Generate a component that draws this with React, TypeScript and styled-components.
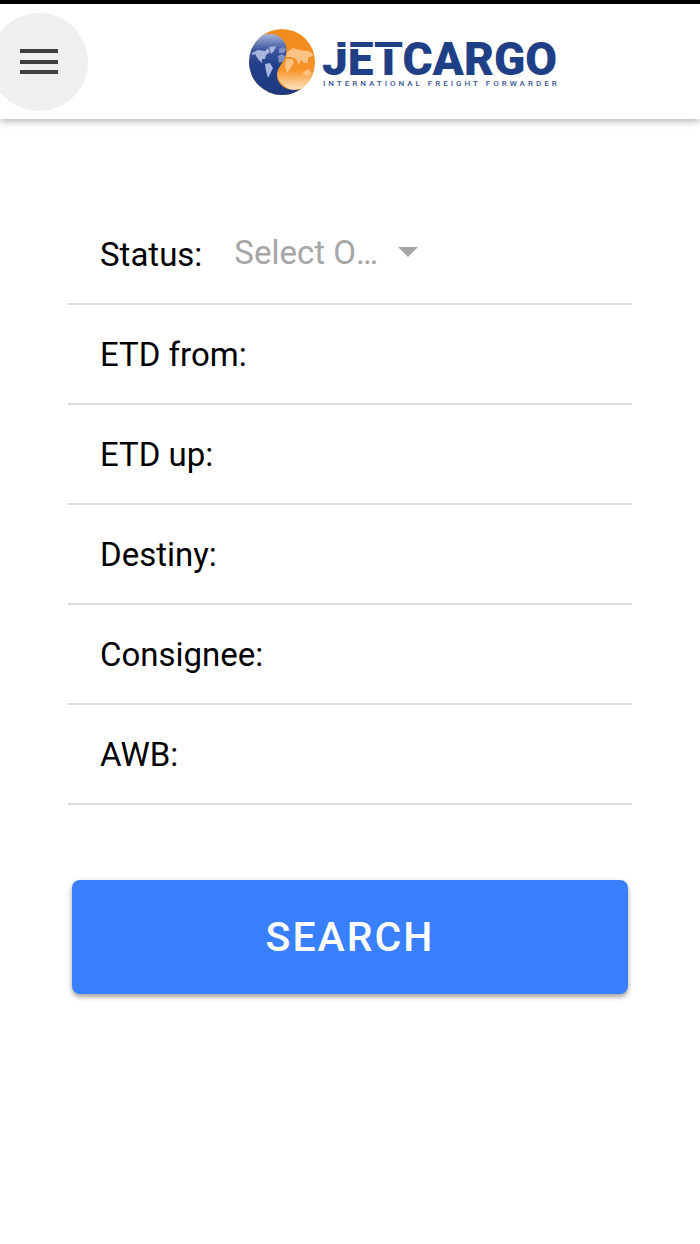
import React from "react";
import styled, { createGlobalStyle } from "styled-components";

const GlobalStyle = createGlobalStyle`
  *, *::before, *::after { box-sizing: border-box; }
  body {
    margin: 0;
    background: #fff;
    color: #000;
    font-family: Roboto, "Liberation Sans", sans-serif;
  }
`;

const Page = styled.div`
  min-height: 100vh;
  border-top: 4px solid #000;
`;

const Header = styled.header`
  display: flex;
  align-items: center;
  height: 115px;
  padding-right: 14px;
  background: #fff;
  box-shadow: 0 2px 8px rgba(0, 0, 0, 0.32);
`;

const MenuButton = styled.button`
  display: grid;
  place-items: center;
  flex: none;
  width: 98px;
  height: 98px;
  margin-left: -10px;
  padding: 0;
  border: 0;
  border-radius: 50%;
  background: #efefef;
  color: #3f3f3f;
`;

const Brand = styled.div`
  display: flex;
  flex: 1;
  justify-content: center;
  padding-left: 36px;
`;

const Wordmark = styled.text`
  font-family: Roboto, sans-serif;
  font-size: 46px;
  font-weight: 900;
  fill: #1f3f86;
`;

const Tagline = styled.text`
  font-family: Roboto, sans-serif;
  font-size: 8px;
  font-weight: 500;
  letter-spacing: 3px;
  fill: #3a5494;
`;

const Form = styled.form`
  display: flex;
  flex-direction: column;
  padding: 86px 68px 40px;
`;

const Row = styled.div`
  display: flex;
  align-items: center;
  gap: 32px;
  height: 100px;
  padding: 0 32px;
  border-bottom: 2px solid #dcdcdc;
`;

const Label = styled.label`
  flex: none;
  padding-top: 2px;
  font-size: 33px;
  line-height: 40px;
`;

const Field = styled.input`
  flex: 1;
  min-width: 0;
  height: 60px;
  padding: 0;
  border: 0;
  outline: 0;
  background: transparent;
  font: inherit;
  font-size: 33px;
`;

const SelectBox = styled.div`
  display: flex;
  align-items: center;
  gap: 18px;
  padding-bottom: 4px;
  color: #a6a6a6;
`;

const Select = styled.select`
  appearance: none;
  width: 146px;
  height: 60px;
  padding: 0;
  border: 0;
  outline: 0;
  background: transparent;
  color: inherit;
  font: inherit;
  font-size: 33px;
  text-overflow: ellipsis;
  white-space: nowrap;
  overflow: hidden;
`;

const SearchButton = styled.button`
  height: 114px;
  margin: 75px 4px 0;
  border: 0;
  border-radius: 8px;
  background: #3880ff;
  color: #fff;
  font: inherit;
  font-size: 41px;
  font-weight: 500;
  letter-spacing: 2px;
  box-shadow: 0 3px 4px rgba(0, 0, 0, 0.3), 0 2px 10px rgba(0, 0, 0, 0.1);
`;

function Logo() {
  return (
    <svg width="314" height="68" viewBox="0 0 314 68" role="img" aria-label="Jet Cargo International Freight Forwarder">
      <defs>
        <linearGradient id="orange" x1="0" y1="0" x2="0" y2="1">
          <stop offset="0" stopColor="#f08a1c" />
          <stop offset="0.55" stopColor="#f79428" />
          <stop offset="1" stopColor="#ffe6c4" />
        </linearGradient>
        <linearGradient id="blue" x1="0" y1="0" x2="0" y2="1">
          <stop offset="0" stopColor="#a9b5dc" />
          <stop offset="0.25" stopColor="#3d56a0" />
          <stop offset="0.5" stopColor="#213f8a" />
          <stop offset="1" stopColor="#1d3a80" />
        </linearGradient>
        <clipPath id="globe"><circle cx="34" cy="34" r="33" /></clipPath>
      </defs>
      <g clipPath="url(#globe)">
        <rect width="68" height="68" fill="#f18c1f" />
        <path d="M38 22Q50 12 66 24V50Q58 62 44 62Q28 56 29 43Z" fill="url(#orange)" />
        <path d="M0 68V18Q9 6 21 6C34 6 40 16 38 26C36 35 29 39 29 47C29 56 37 62 47 62Q54 62 59 57L50 68Z" fill="url(#blue)" />
        <path d="M4 25L10 22 17 23 20 20 22 24 18 27 17 31 14 31 14 35 10 31 7 26 4 27ZM21 19L28 18 26 23 23 26ZM17 36L22 35 25 40 21 48 20 50 18 43Z" fill="#a9b7dc" />
        <path d="M30 28L34 26 37 28 36 33 31 35ZM31 21L35 19 38 21 36 25 31 25Z" fill="#7f92c6" />
        <path d="M39 24L45 20 52 22 61 23 66 27 60 30 60 35 56 35 53 32 51 37 48 31 43 29 38 29ZM38 31L44 31 46 35 42 41 39 45 37 38ZM55 44L61 41 63 45 61 48 56 47Z" fill="#fbc283" />
      </g>
      <Wordmark x="74" y="47">JETCARGO</Wordmark>
      <path d="M74 20H154" stroke="#fff" strokeWidth="2" />
      <Tagline x="75" y="58">INTERNATIONAL FREIGHT FORWARDER</Tagline>
    </svg>
  );
}

const fields = [
  { id: "etd-from", label: "ETD from:" },
  { id: "etd-up", label: "ETD up:" },
  { id: "destiny", label: "Destiny:" },
  { id: "consignee", label: "Consignee:" },
  { id: "awb", label: "AWB:" },
];

export default function App() {
  return (
    <Page>
      <GlobalStyle />
      <Header>
        <MenuButton type="button" aria-label="Menu">
          <svg width="38" height="26" viewBox="0 0 38 26" fill="currentColor">
            <path d="M0 0H38V4H0ZM0 11H38V15H0ZM0 21H38V25H0Z" />
          </svg>
        </MenuButton>
        <Brand><Logo /></Brand>
      </Header>
      <Form onSubmit={(event) => event.preventDefault()}>
        <Row>
          <Label htmlFor="status">Status:</Label>
          <SelectBox>
            <Select id="status" defaultValue="">
              <option value="">Select One</option>
            </Select>
            <svg width="20" height="10" viewBox="0 0 20 10" fill="currentColor" aria-hidden="true">
              <path d="M0 0H20L10 10Z" />
            </svg>
          </SelectBox>
        </Row>
        {fields.map((field) => (
          <Row key={field.id}>
            <Label htmlFor={field.id}>{field.label}</Label>
            <Field id={field.id} type="text" />
          </Row>
        ))}
        <SearchButton type="submit">SEARCH</SearchButton>
      </Form>
    </Page>
  );
}
